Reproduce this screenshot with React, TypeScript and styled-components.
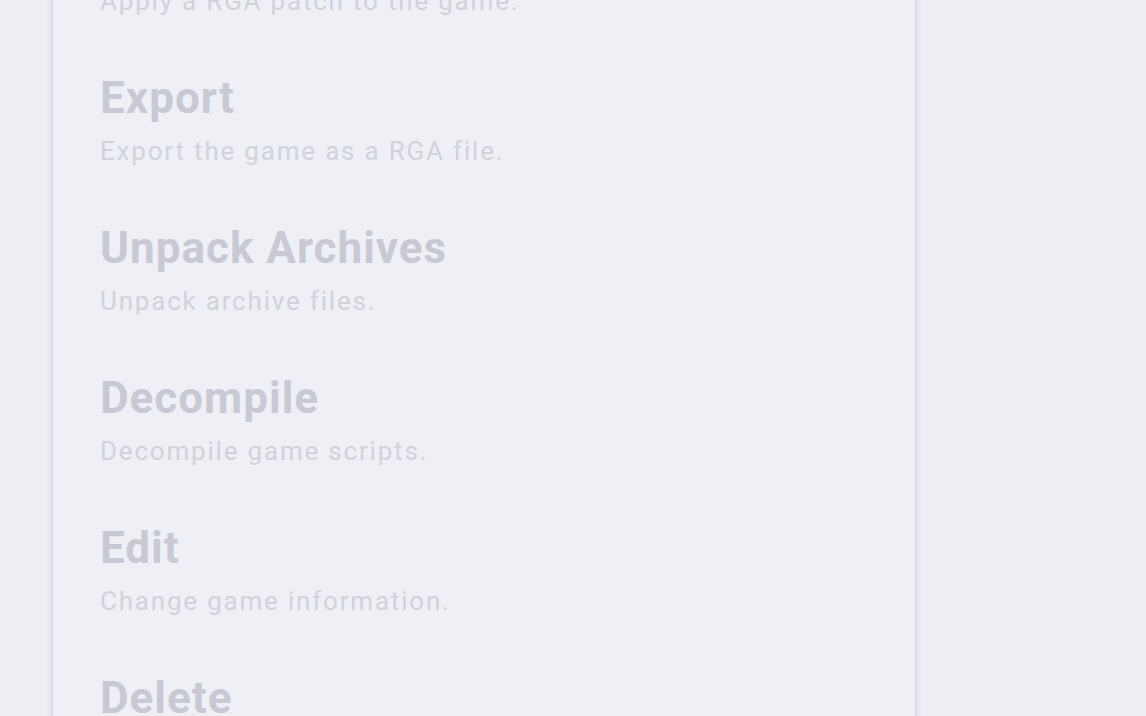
import * as React from "react";
import styled, { createGlobalStyle } from "styled-components";

const GlobalStyle = createGlobalStyle`
  html, body {
    margin: 0;
    padding: 0;
    background: #eeeef5;
    overflow: hidden;
    font-family: Roboto, "Liberation Sans", sans-serif;
  }
`;

const Page = styled.div`
  width: 1146px;
  height: 716px;
  overflow: hidden;
  background: #eeeef5;
  display: flex;
  align-items: flex-start;
  padding-left: 51px;
  box-sizing: border-box;
`;

const Card = styled.div`
  width: 866px;
  margin-top: -78px;
  background: #efeff6;
  border-left: 2px solid #dcdce4;
  border-right: 2px solid #dcdce4;
  box-shadow: 0 0 6px rgba(150, 150, 170, 0.18);
  padding: 0 47px;
  box-sizing: border-box;
  display: flex;
  flex-direction: column;
`;

const Row = styled.div`
  display: flex;
  flex-direction: column;
  gap: 11px;
  padding-bottom: 55px;
`;

const Title = styled.div`
  font-size: 44px;
  line-height: 52px;
  font-weight: 700;
  letter-spacing: 1px;
  color: #c9c9d3;
`;

const Description = styled.div`
  font-size: 26px;
  line-height: 32px;
  letter-spacing: 1.8px;
  color: #d2d2db;
`;

const items = [
  { title: "Patch", description: "Apply a RGA patch to the game." },
  { title: "Export", description: "Export the game as a RGA file." },
  { title: "Unpack Archives", description: "Unpack archive files." },
  { title: "Decompile", description: "Decompile game scripts." },
  { title: "Edit", description: "Change game information." },
  { title: "Delete", description: "Delete the game." },
];

export default function App() {
  return (
    <>
      <GlobalStyle />
      <Page>
        <Card>
          {items.map((item) => (
            <Row key={item.title}>
              <Title>{item.title}</Title>
              <Description>{item.description}</Description>
            </Row>
          ))}
        </Card>
      </Page>
    </>
  );
}
